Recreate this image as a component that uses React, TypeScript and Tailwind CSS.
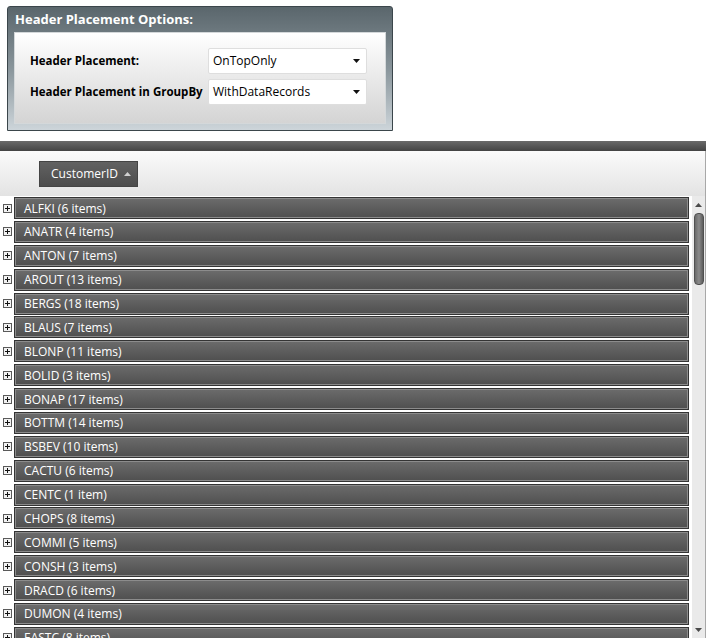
const groups: [string, string][] = [
  ["ALFKI", "6 items"],
  ["ANATR", "4 items"],
  ["ANTON", "7 items"],
  ["AROUT", "13 items"],
  ["BERGS", "18 items"],
  ["BLAUS", "7 items"],
  ["BLONP", "11 items"],
  ["BOLID", "3 items"],
  ["BONAP", "17 items"],
  ["BOTTM", "14 items"],
  ["BSBEV", "10 items"],
  ["CACTU", "6 items"],
  ["CENTC", "1 item"],
  ["CHOPS", "8 items"],
  ["COMMI", "5 items"],
  ["CONSH", "3 items"],
  ["DRACD", "6 items"],
  ["DUMON", "4 items"],
  ["EASTC", "8 items"],
  ["ERNSH", "30 items"],
];

function Dropdown({ value }: { value: string }) {
  return (
    <div className="flex h-[26px] w-[159px] items-center justify-between rounded-[2px] border border-[#dedede] bg-white pl-[4px] pr-[6px] text-[12px] text-black">
      <span>{value}</span>
      <svg width="7" height="4" viewBox="0 0 7 4">
        <path d="M0 0h7L3.5 4z" fill="#111" />
      </svg>
    </div>
  );
}

function PlusBox() {
  return (
    <svg width="9" height="9" viewBox="0 0 9 9">
      <rect x="0.5" y="0.5" width="8" height="8" fill="#f2f2f2" stroke="#5a5a5a" />
      <path d="M2 4.5h5M4.5 2v5" stroke="#111" strokeWidth="1" />
    </svg>
  );
}

function Panel() {
  return (
    <div className="flex h-[125px] w-[386px] flex-col rounded-t-[3px] border border-[#3b464b] bg-gradient-to-b from-[#5a666c] via-[#89959b] to-[#cdd5da]">
      <div className="flex h-[25px] items-center pl-[7px] text-[13px] font-bold text-white">
        Header Placement Options:
      </div>
      <div className="mx-[6px] mb-[6px] flex flex-1 flex-col gap-[5px] border border-[#d4d8da] bg-gradient-to-b from-white to-[#d4d4d4] pl-[15px] pt-[15px]">
        <div className="flex items-center">
          <div className="w-[178px] whitespace-nowrap text-[11.5px] font-bold text-black">Header Placement:</div>
          <Dropdown value="OnTopOnly" />
        </div>
        <div className="flex items-center">
          <div className="w-[178px] whitespace-nowrap text-[11.5px] font-bold text-black">Header Placement in GroupBy</div>
          <Dropdown value="WithDataRecords" />
        </div>
      </div>
    </div>
  );
}

export default function App() {
  return (
    <div className="h-[638px] w-[710px] overflow-hidden bg-white font-['Open_Sans',sans-serif]">
      <div className="pl-[7px] pt-[6px]">
        <Panel />
      </div>

      <div className="mt-[10px] w-[706px]">
        <div className="h-[10px] bg-gradient-to-b from-[#6a6a6a] to-[#444444]" />
        <div className="h-[45px] border-r border-[#a8a8a8] bg-gradient-to-b from-[#fbfbfb] to-[#e3e3e3] pl-[39px] pt-[10px]">
          <div className="flex h-[26px] w-[99px] items-center justify-between border border-[#444] bg-gradient-to-b from-[#626262] to-[#4c4c4c] pl-[11px] pr-[6px] text-[12px] text-white">
            <span>CustomerID</span>
            <svg width="7" height="4" viewBox="0 0 7 4">
              <path d="M0 4h7L3.5 0z" fill="#d0d0d0" />
            </svg>
          </div>
        </div>

        <div className="flex h-[443px] border-r border-[#a8a8a8]">
          <div className="flex-1 pt-[1px]">
            {groups.map(([id, count]) => (
              <div key={id} className="flex h-[23.88px] items-start">
                <div className="flex h-[22px] w-[14px] items-center justify-center">
                  <PlusBox />
                </div>
                <div className="flex h-[22px] flex-1 items-center border border-[#343434] bg-gradient-to-b from-[#6c6c6c] to-[#4f4f4f] pl-[9px] pt-[1px] text-[12px] text-white shadow-[inset_0_0_0_1px_#8c8c8c]">
                  {id} ({count})
                </div>
              </div>
            ))}
          </div>
          <div className="ml-[3px] flex w-[13px] flex-col items-center bg-[#eaeaea] pb-[7px] pt-[7px]">
            <svg width="7" height="4" viewBox="0 0 7 4">
              <path d="M0 4h7L3.5 0z" fill="#4a4a4a" />
            </svg>
            <div className="mt-[6px] h-[72px] w-[10px] rounded-[4px] border border-[#505050] bg-gradient-to-r from-[#6a6a6a] via-[#8a8a8a] to-[#5c5c5c]" />
            <div className="flex-1" />
            <svg width="7" height="4" viewBox="0 0 7 4">
              <path d="M0 0h7L3.5 4z" fill="#4a4a4a" />
            </svg>
          </div>
        </div>
      </div>
    </div>
  );
}
